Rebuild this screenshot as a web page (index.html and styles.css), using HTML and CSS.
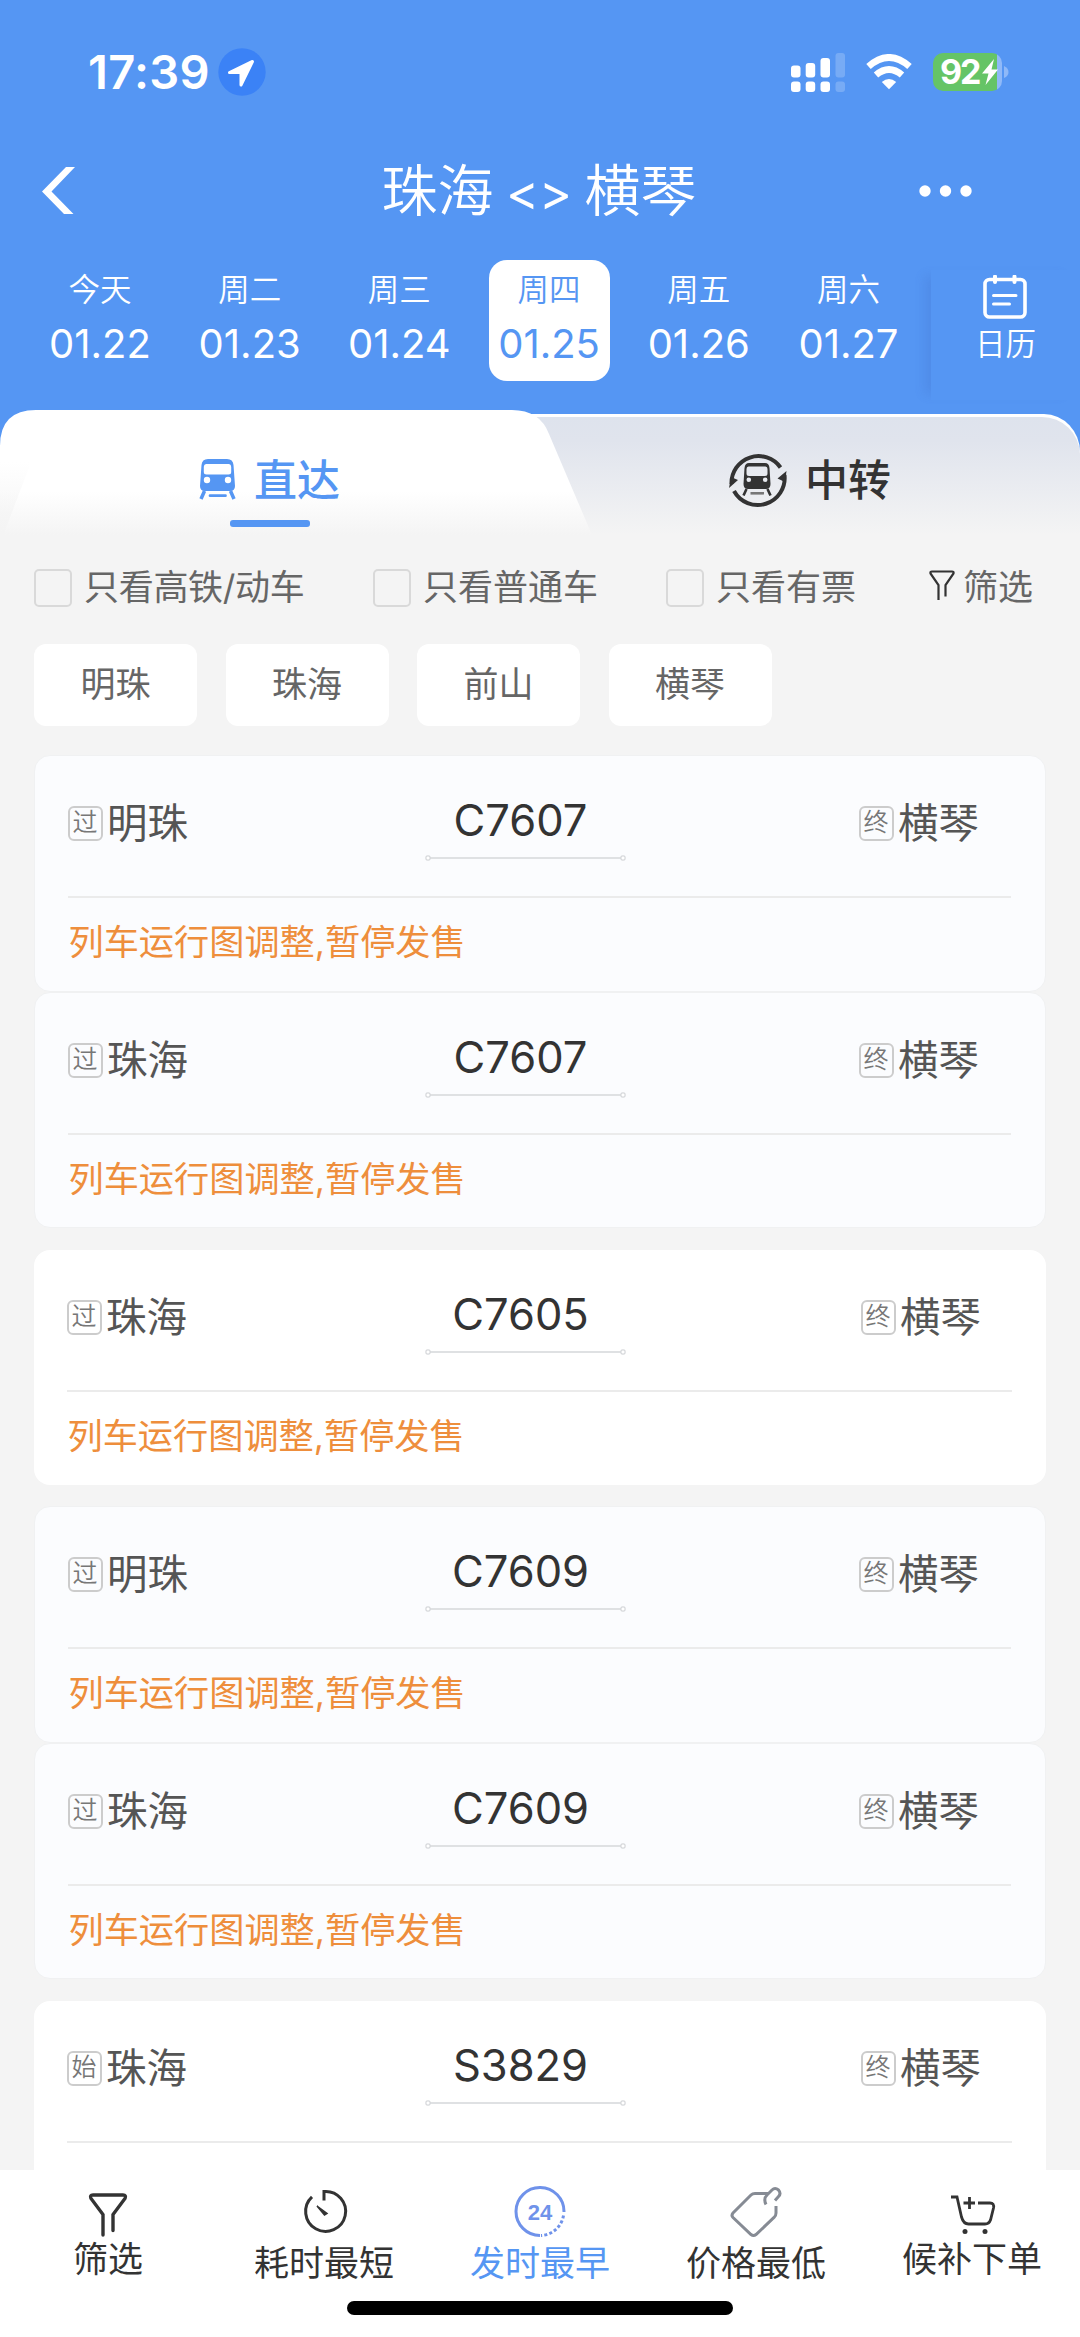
FILE: index.html
```html
<!DOCTYPE html>
<html lang="zh-CN">
<head>
<meta charset="utf-8">
<title>珠海 - 横琴</title>
<link rel="stylesheet" href="styles.css">
</head>
<body>
<div class="screen">
  <header class="header">
    <div class="status">
      <span class="clock">17:39</span>
      <svg class="locate" width="48" height="48" viewBox="0 0 48 48"><circle cx="24" cy="24" r="23.7" fill="#3b82f6"/><path d="M34 13.500L11.500 24.500H23V37L34.500 13.500Z" fill="#fff" stroke="#fff" stroke-width="3" stroke-linejoin="round"/></svg>
      <svg class="signal" width="54" height="40" viewBox="0 0 54 40">
        <g fill="#fff"><rect x="0" y="12.500" width="9.500" height="12" rx="3"/><rect x="14.700" y="10" width="9.500" height="14.500" rx="3"/><rect x="29.500" y="5" width="9.500" height="19.500" rx="3"/><rect x="0" y="28.500" width="9.500" height="10.500" rx="3"/><rect x="14.700" y="28.500" width="9.500" height="10.500" rx="3"/><rect x="29.500" y="28.500" width="9.500" height="10.500" rx="3"/></g>
        <g fill="#fff" opacity=".2"><rect x="44.500" y="0" width="9.500" height="24.500" rx="3"/><rect x="44.500" y="28.500" width="9.500" height="10.500" rx="3"/></g>
      </svg>
      <svg class="wifi" width="46" height="36" viewBox="0 0 46 36"><g fill="none" stroke="#fff" stroke-width="6.800"><path d="M2.500 12.500Q23 -5.500 43.500 12.500"/><path d="M10 21Q23 10 36 21"/></g><path d="M15.800 28Q23 22 30.200 28L23 35.200Z" fill="#fff"/></svg>
      <div class="battery">
        <span class="level">92</span>
        <svg class="bolt" width="18" height="26" viewBox="0 0 18 26"><path d="M13 0L1 14.500H7.500L4.500 26L17 10.500H10.500Z" fill="#fff"/></svg>
        <svg class="cap" width="5" height="14" viewBox="0 0 5 14"><path d="M0 1Q4.500 3 4.500 7T0 13Z" fill="#8fb9f8"/></svg>
      </div>
    </div>
    <div class="titlebar">
      <svg class="back" width="34" height="48" viewBox="0 0 34 48"><path d="M24 0H33L9.500 24.500L31.500 47H22L0 24.500Z" fill="#fff"/></svg>
      <h1 class="title"><span>珠海</span><span class="arrows">&lt;&gt;</span><span>横琴</span></h1>
      <svg class="more" width="54" height="14" viewBox="0 0 54 14"><g fill="#fff"><circle cx="6" cy="7" r="5.700"/><circle cx="26.500" cy="7" r="5.700"/><circle cx="47" cy="7" r="5.700"/></g></svg>
    </div>
    <div class="dates">
      <div class="day"><span>今天</span><b>01.22</b></div>
      <div class="day"><span>周二</span><b>01.23</b></div>
      <div class="day"><span>周三</span><b>01.24</b></div>
      <div class="day day-on"><span>周四</span><b>01.25</b></div>
      <div class="day"><span>周五</span><b>01.26</b></div>
      <div class="day"><span>周六</span><b>01.27</b></div>
      <div class="calendar">
        <svg width="44" height="44" viewBox="0 0 44 44" fill="none" stroke="#fff" stroke-linecap="round"><rect x="2" y="4.500" width="40" height="37.500" rx="4.500" stroke-width="3.600"/><path d="M12 1.500V7M31.500 1.500V7" stroke-width="4"/><path d="M10.500 20.500H33M10.500 29H26.500" stroke-width="3"/></svg>
        <span>日历</span>
      </div>
    </div>
  </header>

  <nav class="tabs">
    <svg class="tabshape" width="1080" height="140" viewBox="0 0 1080 140">
      <defs>
        <linearGradient id="grey" x1="0" y1="0" x2="0" y2="1"><stop offset="0" stop-color="#dee3ed"/><stop offset=".2" stop-color="#e0e4ed"/><stop offset="1" stop-color="#f4f4f4"/></linearGradient>
        <linearGradient id="white" x1="0" y1="0" x2="0" y2="1"><stop offset="0" stop-color="#fff"/><stop offset=".65" stop-color="#fff"/><stop offset="1" stop-color="#f4f4f4"/></linearGradient>
        <linearGradient id="edge" x1="0" y1="0" x2="0" y2="1"><stop offset="0" stop-color="#f4f4f4" stop-opacity="0"/><stop offset="1" stop-color="#f4f4f4"/></linearGradient>
      </defs>
      <path d="M450 4H1044A36 38 0 0 1 1080 42V140H450Z" fill="#fff"/>
      <path d="M450 7H1042A38 38 0 0 1 1080 44V125H450Z" fill="url(#grey)"/>
      <path d="M450 124H1080V140H0V124Z" fill="#f4f4f4"/>
      <path d="M0 36Q0 0 36 0H512Q540 0 549 24L592 125H0Z" fill="url(#white)"/>
      <path d="M0 52H31L3 126H0Z" fill="url(#edge)"/>
    </svg>
    <div class="tab tab-on">
      <svg class="train" width="37" height="42" viewBox="0 0 37 42"><path fill="#5596f3" fill-rule="evenodd" d="M9 1H28Q34 1 34.500 7L36 28Q36 33 31 33H6Q1 33 1 28L2.500 7Q3 1 9 1ZM7.500 6Q5 6 4.800 9V14Q4.800 16.500 7.500 16.500H29.500Q32.200 16.500 32.200 14V9Q32 6 29.500 6ZM8 18.800A3.200 3.200 0 1 0 8 25.200A3.200 3.200 0 1 0 8 18.800ZM29 18.800A3.200 3.200 0 1 0 29 25.200A3.200 3.200 0 1 0 29 18.800Z"/><path d="M5.500 33L2 41M31.500 33L35 41" stroke="#5596f3" stroke-width="3.500"/><path d="M11 37.700H26.500" stroke="#5596f3" stroke-width="2.700" stroke-linecap="round"/></svg>
      <span>直达</span>
    </div>
    <div class="tab tab-off">
      <svg width="58" height="58" viewBox="0 0 58 58"><g fill="none" stroke="#333" stroke-width="4"><path d="M2.500 34A27 27 0 0 1 51.500 17.500"/><path d="M55.500 25A27 27 0 0 1 5 41"/></g><path d="M0 38L2 27L9 30ZM57.500 21L56 32L48.500 28.500Z" fill="#333"/><path fill="#333" fill-rule="evenodd" d="M20 13H36Q40 13 40.500 18L41.500 34Q41.500 39 37 39H19Q14.500 39 14.500 34L15.500 18Q16 13 20 13ZM19.500 16.500Q17.500 16.500 17.500 19V23.500Q17.500 26 20 26H36Q38.500 26 38.500 23.500V19Q38.500 16.500 36.500 16.500ZM19.800 27.500A2.300 2.300 0 1 0 19.800 32.100A2.300 2.300 0 1 0 19.800 27.500ZM36.200 27.500A2.300 2.300 0 1 0 36.200 32.100A2.300 2.300 0 1 0 36.200 27.500Z"/><path d="M17.500 39L14.500 45.500M38.500 39L41.500 45.500" stroke="#333" stroke-width="2.600"/><path d="M21.500 43.300H35" stroke="#777" stroke-width="2.600"/></svg>
      <span>中转</span>
    </div>
  </nav>

  <div class="filters">
    <label class="check check-a"><i></i><span>只看高铁/动车</span></label>
    <label class="check check-b"><i></i><span>只看普通车</span></label>
    <label class="check check-c"><i></i><span>只看有票</span></label>
    <div class="sift"><svg width="26" height="30" viewBox="0 0 26 30" fill="none" stroke="#333" stroke-width="2.200"><path d="M9.500 30V15L1.500 3.500Q1 1.500 3 1.500H23Q25 1.500 24.500 3.500L16.500 15V26.500"/></svg><span>筛选</span></div>
  </div>
  <div class="chips"><span>明珠</span><span>珠海</span><span>前山</span><span>横琴</span></div>

  <main class="list">
    <section class="group soft">
      <article class="card"><div class="route"><div class="stop"><i>过</i>明珠</div><div class="no"><b>C7607</b><s></s></div><div class="stop"><i>终</i>横琴</div></div><p>列车运行图调整,暂停发售</p></article>
      <article class="card"><div class="route"><div class="stop"><i>过</i>珠海</div><div class="no"><b>C7607</b><s></s></div><div class="stop"><i>终</i>横琴</div></div><p>列车运行图调整,暂停发售</p></article>
    </section>
    <section class="group plain">
      <article class="card"><div class="route"><div class="stop"><i>过</i>珠海</div><div class="no"><b>C7605</b><s></s></div><div class="stop"><i>终</i>横琴</div></div><p>列车运行图调整,暂停发售</p></article>
    </section>
    <section class="group soft">
      <article class="card"><div class="route"><div class="stop"><i>过</i>明珠</div><div class="no"><b>C7609</b><s></s></div><div class="stop"><i>终</i>横琴</div></div><p>列车运行图调整,暂停发售</p></article>
      <article class="card"><div class="route"><div class="stop"><i>过</i>珠海</div><div class="no"><b>C7609</b><s></s></div><div class="stop"><i>终</i>横琴</div></div><p>列车运行图调整,暂停发售</p></article>
    </section>
    <section class="group plain">
      <article class="card"><div class="route"><div class="stop"><i>始</i>珠海</div><div class="no"><b>S3829</b><s></s></div><div class="stop"><i>终</i>横琴</div></div></article>
    </section>
  </main>

  <footer class="footer">
    <div class="actions">
      <div class="action high"><svg width="52" height="52" viewBox="0 0 52 52" fill="none" stroke="#333" stroke-width="3.400" stroke-linecap="round"><path d="M21 49V28.500L9 12.500Q7.500 9 11 9H41Q44.500 9 43 12.500L31 28.500V44.500"/></svg><span>筛选</span></div>
      <div class="action"><svg width="52" height="52" viewBox="0 0 52 52" fill="none" stroke="#333" stroke-width="3"><path d="M26 14.500V5.500A20 20 0 1 1 14 10.800" stroke-linecap="butt"/><path d="M19 20L29 27.500L26.500 29Z" fill="#333" stroke-width="1.500"/></svg><span>耗时最短</span></div>
      <div class="action on"><svg width="52" height="52" viewBox="0 0 52 52" fill="none" stroke="#6f92ea" stroke-width="3"><path d="M26 49.500A24 24 0 1 1 50 26"/><path d="M49.500 29.500A24 24 0 0 1 27 49.500" stroke-dasharray="3 2.200"/><text x="26" y="34" text-anchor="middle" class="hours">24</text></svg><span>发时最早</span></div>
      <div class="action"><svg width="52" height="52" viewBox="0 0 52 52" fill="none" stroke="#868b94" stroke-width="3"><path d="M39 7.500H25Q22.500 7.500 21 9L3 27Q1 29.500 3 31.500L21 48.500Q23.500 50.500 26 48.500L44 31.500Q46 30 46 27V20M36 18.500Q33 12.500 37.500 8.500L42 4Q45 1 48.500 4Q51.500 7.500 48.500 10.500L45 14.500"/></svg><span>价格最低</span></div>
      <div class="action high"><svg width="52" height="52" viewBox="0 0 52 52" fill="none" stroke="#333" stroke-width="2.800"><path d="M5 11H11L15.500 31Q17.500 38 22.500 38H39Q43 38 44.500 34L47.500 22Q48.500 17 44 17H32M23.500 11V23M17.500 17H29"/><circle cx="19" cy="45.500" r="2.500" fill="#333" stroke="none"/><circle cx="39" cy="45.500" r="2.500" fill="#333" stroke="none"/></svg><span>候补下单</span></div>
    </div>
    <div class="home"></div>
  </footer>
</div>
</body>
</html>
```
FILE: styles.css
```css
* { box-sizing: border-box; }
body { margin: 0; background: #f4f4f4; font-family: Inter, "Noto Sans CJK SC", sans-serif; font-weight: 400; }
svg { display: block; flex: none; }
i, s, b { font-style: normal; text-decoration: none; font-weight: 400; }

.screen { width: 1080px; height: 2337px; overflow: hidden; display: flex; flex-direction: column; background: #f4f4f4; }
.header { height: 410px; flex: none; background: #5596f3; color: #fff; display: flex; flex-direction: column; }

.status { height: 144px; padding-left: 88px; display: flex; align-items: center; }
.clock { width: 130px; font-size: 47px; font-weight: 560; line-height: 56px; margin-top: -1px; letter-spacing: 0.3px; white-space: nowrap; }
.signal { margin: 2px 0 0 525px; }
.wifi { margin-left: 21px; }
.battery { width: 69px; height: 38px; margin-left: 21px; border-radius: 10px; display: flex; align-items: center; position: relative; background: linear-gradient(90deg, #65c466 63.500px, #8fb9f8 63.500px); }
.level { padding-left: 7px; font-size: 34px; font-weight: 700; line-height: 38px; letter-spacing: -2px; }
.bolt { margin-left: 1px; }
.cap { position: absolute; left: 71px; top: 12px; }

.titlebar { height: 94px; display: flex; align-items: center; padding-left: 42px; }
.back { width: 34px; }
.title { width: 690px; margin: 0 0 0 118px; display: flex; justify-content: center; align-items: center; font-size: 56px; font-weight: 350; line-height: 94px; }
.arrows { width: 91px; text-align: center; font-size: 50px; font-weight: 400; padding-top: 2px; }
.more { margin-left: 35px; }

.dates { display: flex; padding: 22px 0 0 39.500px; height: 172px; }
.day { width: 121px; height: 121px; margin-right: 28.700px; flex: none; display: flex; flex-direction: column; align-items: center; border-radius: 18px; }
.day span { font-size: 31.500px; font-weight: 350; line-height: 46px; margin-top: 7px; }
.day b { font-size: 40px; font-weight: 430; line-height: 46px; margin-top: 7.500px; }
.day-on { background: #fff; color: #5596f3; }
.calendar { width: 149px; height: 130px; margin-left: -6.700px; margin-top: 10px; display: flex; flex-direction: column; align-items: center; font-size: 30.500px; font-weight: 350; box-shadow: -12px 0 10px -6px rgba(60, 100, 190, .2); }
.calendar svg { margin-top: 5px; }
.calendar span { line-height: 46px; margin-top: 2px; }

.tabs { height: 140px; flex: none; position: relative; display: flex; background: linear-gradient(#5596f3 60px, #f4f4f4 60px); }
.tabshape { position: absolute; left: 0; top: 0; }
.tab { position: relative; display: flex; align-items: center; height: 138px; font-size: 43px; font-weight: 500; }
.tab span { margin: -5px 0 0 18px; }
.tab-on { width: 540px; padding-left: 199px; color: #5596f3; }
.tab-on::after { content: ""; position: absolute; left: 230px; top: 110px; width: 80px; height: 7px; border-radius: 3px; background: #5596f3; }
.tab-off { padding-left: 189px; color: #333; }

.filters { height: 76px; flex: none; display: flex; align-items: center; padding: 0 34px; font-size: 35px; color: #666; white-space: nowrap; }
.filters span { margin-top: -8px; }
.check { display: flex; align-items: center; }
.check i { width: 38px; height: 38px; border: 2px solid #d9d9d9; border-radius: 5px; margin-right: 12px; }
.check-a { width: 339px; letter-spacing: -0.3px; }
.check-b { width: 293px; }
.check-c { width: 263px; }
.sift { display: flex; align-items: center; gap: 8px; }
.sift svg { margin-top: -6px; }
.chips { display: flex; gap: 28.500px; padding: 18px 34px 0; height: 129px; flex: none; }
.chips span { width: 163px; height: 82px; border-radius: 12px; background: #fff; color: #666; font-size: 35px; line-height: 80px; text-align: center; }

.list { flex: 1; min-height: 0; overflow: hidden; padding: 0 34px; display: flex; flex-direction: column; gap: 21.500px; }
.group { flex: none; }
.card { height: 235px; background: #fff; border-radius: 16px; padding: 0 34px 0 32.500px; }
.soft .card { background: #fbfcfe; border: 1px solid #f0f1f2; height: 236.500px; }
.route { height: 142px; border-bottom: 2px solid #ebebeb; display: flex; }
.stop { flex: 1; padding-top: 38px; display: flex; font-size: 40.500px; line-height: 60px; color: #555; white-space: nowrap; }
.stop:first-child { flex: none; width: 357px; }
.plain .stop:first-child { width: 358px; }
.stop i { flex: none; width: 35px; height: 35px; margin: 12px 4.500px 0 0; border: 2px solid #ccc; border-radius: 6px; color: #777; font-size: 25px; line-height: 29px; text-align: center; font-weight: 350; }
.no { width: 201px; flex: none; margin-right: 233px; color: #333; display: flex; flex-direction: column; align-items: center; }
.plain .no { margin-right: 235px; }
.no b { font-size: 43.500px; font-weight: 430; line-height: 50px; margin-top: 39px; margin-right: 9px; }
.no s { width: 201px; height: 6px; margin-top: 10px; background: radial-gradient(circle at 3px 3px, #fff 1px, #d4d6d9 2px, transparent 3.500px), radial-gradient(circle at 198px 3px, #fff 1px, #d4d6d9 2px, transparent 3.500px), linear-gradient(#dfe1e3, #dfe1e3) 5px 2px / 191px 2px no-repeat; }
.card p { margin: 0; padding: 17px 0 0 1px; font-size: 35.200px; line-height: 54px; color: #ee8e3c; }

.footer { height: 167px; flex: none; background: #fff; color: #333; }
.actions { height: 131px; display: flex; }
.action { width: 216px; display: flex; flex-direction: column; align-items: center; padding-top: 16px; font-size: 35px; }
.action span { line-height: 50px; margin-top: 0; }
.high span { margin-top: -4px; }
.on { color: #5596f3; }
.hours { font: 700 22px "Liberation Sans", sans-serif; fill: #6f92ea; stroke: none; }
.home { width: 386px; height: 14px; margin: 0 auto; border-radius: 7px; background: #000; }
```
